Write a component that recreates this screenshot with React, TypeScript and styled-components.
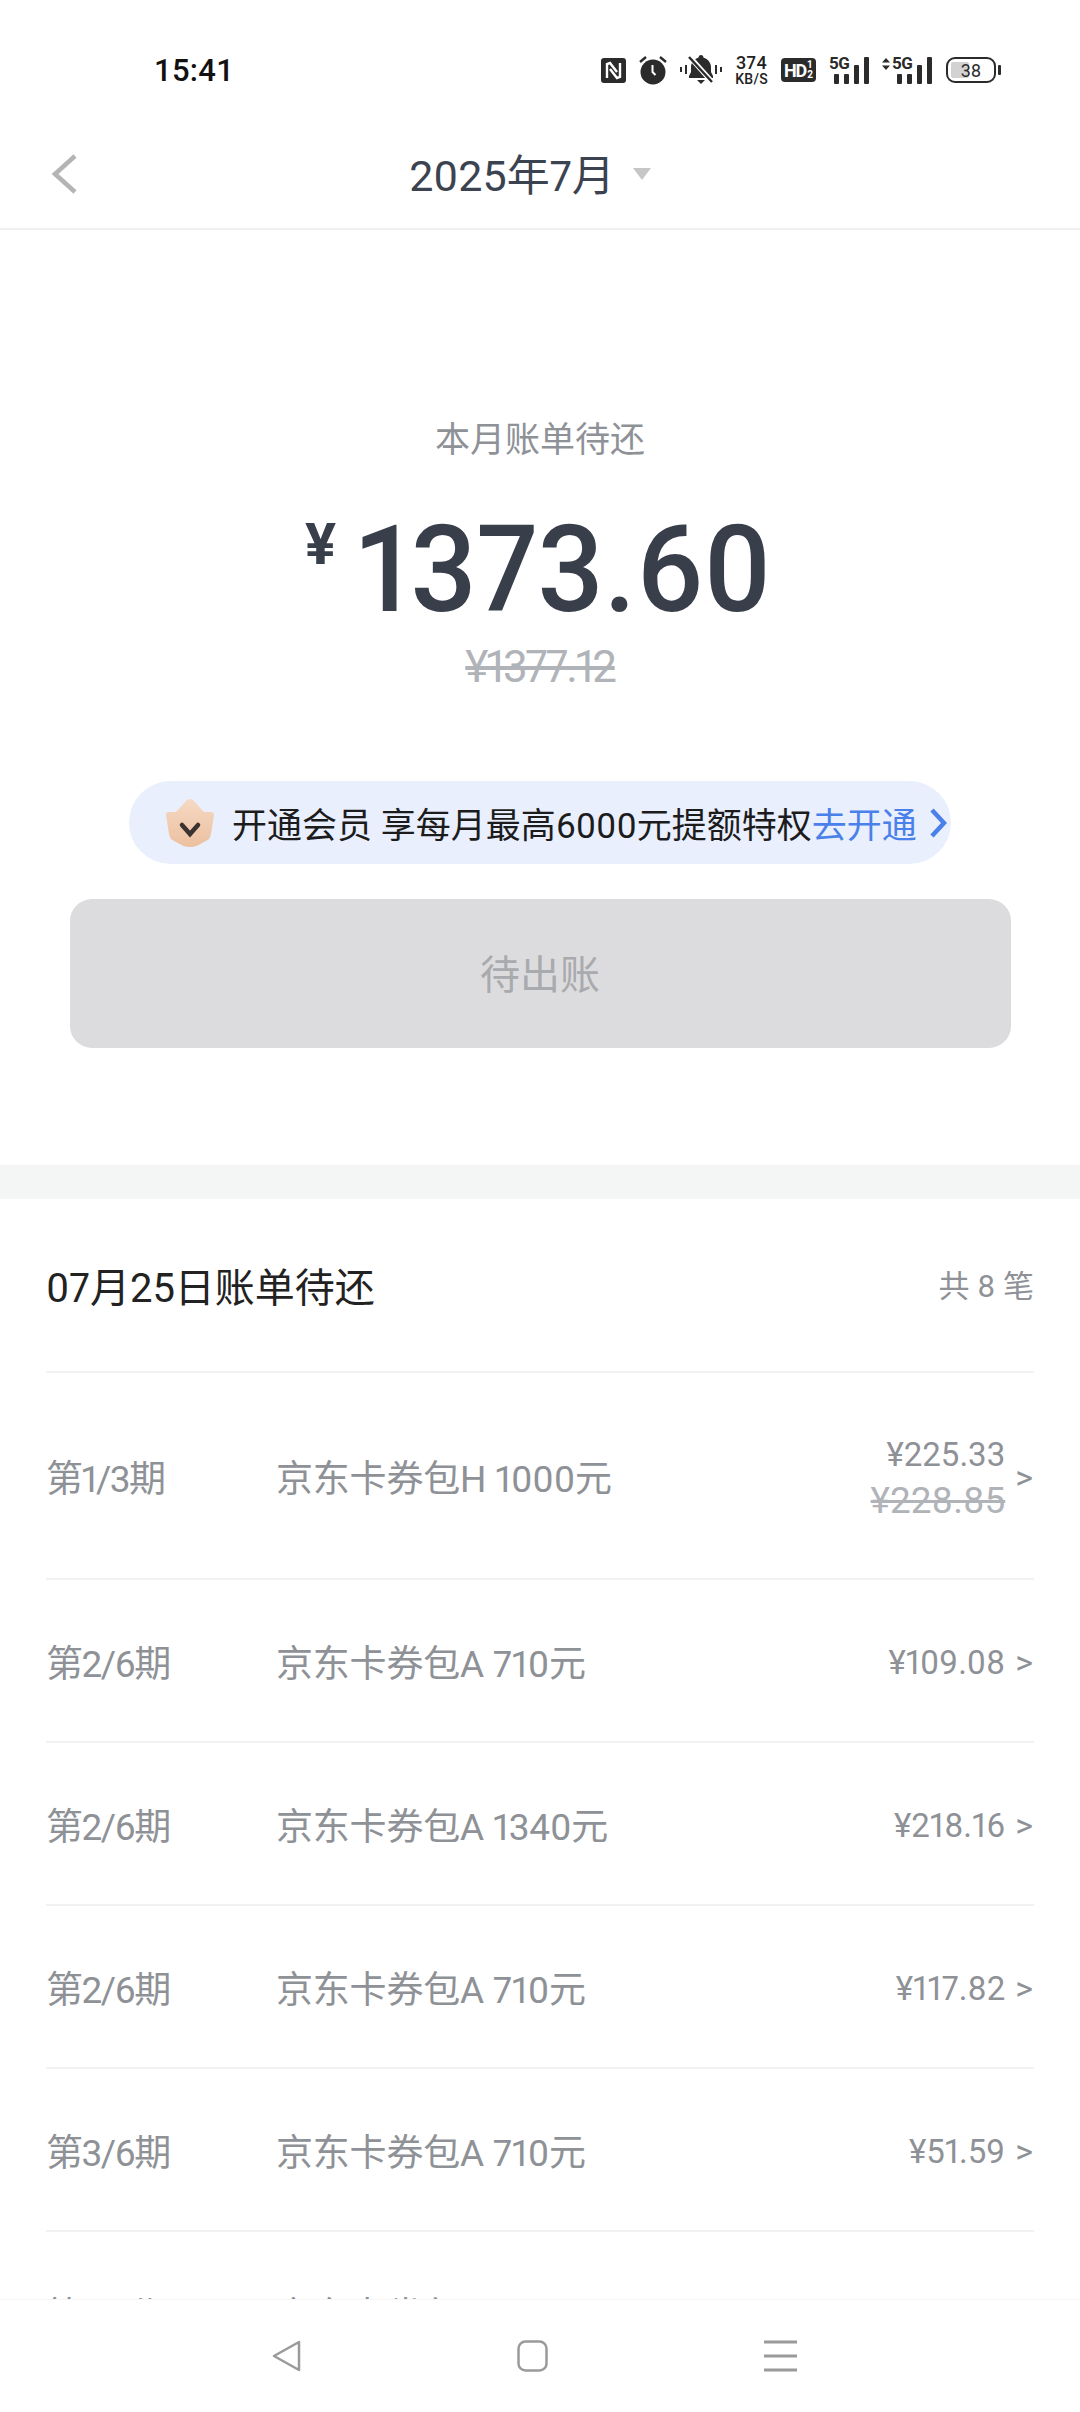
import React, { FC } from "react";
import styled, { createGlobalStyle } from "styled-components";

interface IBill {
  period: string;
  name: string;
  amount: string;
  original?: string;
}

const bills: IBill[] = [
  { period: "第1/3期", name: "京东卡券包H 1000元", amount: "¥225.33", original: "¥228.85" },
  { period: "第2/6期", name: "京东卡券包A 710元", amount: "¥109.08" },
  { period: "第2/6期", name: "京东卡券包A 1340元", amount: "¥218.16" },
  { period: "第2/6期", name: "京东卡券包A 710元", amount: "¥117.82" },
  { period: "第3/6期", name: "京东卡券包A 710元", amount: "¥51.59" },
  { period: "第3/6期", name: "京东卡券包A 710元", amount: "¥88.20" },
];

const SignalBars: FC = () => (
  <svg width="35" height="27" viewBox="0 0 35 27">
    <rect x="0" y="17" width="5" height="10" rx="1" fill="#2b2b2b" />
    <rect x="10" y="17" width="5" height="10" rx="1" fill="#2b2b2b" />
    <rect x="20" y="8" width="5" height="19" rx="1" fill="#2b2b2b" />
    <rect x="30" y="0" width="5" height="27" rx="1" fill="#2b2b2b" />
  </svg>
);

const App: FC = () => {
  return (
    <Page>
      <GlobalStyle />
      <StatusBar>
        <Time>15:41</Time>
        <StatusIcons>
          <svg width="25" height="25" viewBox="0 0 25 25">
            <rect width="25" height="25" rx="3" fill="#2b2b2b" />
            <path d="M6 20V6l3-1 7 9M19 5v14l-3 1-7-9" fill="none" stroke="#fff" strokeWidth="2.4" />
          </svg>
          <svg width="28" height="30" viewBox="0 0 28 30">
            <circle cx="14" cy="17" r="12.5" fill="#2b2b2b" />
            <path d="M13.5 10v7l3 3" fill="none" stroke="#fff" strokeWidth="2" />
            <path d="M1 7l6-5M27 7l-6-5" stroke="#2b2b2b" strokeWidth="2.4" />
          </svg>
          <svg width="42" height="30" viewBox="0 0 42 30">
            <path
              d="M21 0c-1.500 0-2.400 1-2.400 2.500C14 4 11 8 11 12v5l-2 4v2h24v-2l-2-4v-5c0-4-3-8-7.600-9.500C23.400 1 22.500 0 21 0zM17 25h8l-4 4z"
              fill="#2b2b2b"
            />
            <path d="M9 1l24 27" stroke="#fff" strokeWidth="5" />
            <path d="M9 2l23 25" stroke="#2b2b2b" strokeWidth="2.4" />
            <path d="M1 12v5M6 10v9M36 10v9M41 12v5" stroke="#2b2b2b" strokeWidth="2" />
          </svg>
          <Speed>
            <SpeedValue>374</SpeedValue>
            <SpeedUnit>KB/S</SpeedUnit>
          </Speed>
          <HdBadge>
            HD
            <HdFraction>
              <span>1</span>
              <span>2</span>
            </HdFraction>
          </HdBadge>
          <Signal $width={40}>
            <SignalLabel $left={0}>5G</SignalLabel>
            <SignalBars />
          </Signal>
          <Signal $width={50}>
            <SignalLabel $left={10}>5G</SignalLabel>
            <DataArrows width="8" height="12" viewBox="0 0 8 12">
              <path d="M4 0l4 4.500H0zM4 12L0 7.500h8z" fill="#2b2b2b" />
            </DataArrows>
            <SignalBars />
          </Signal>
          <Battery>
            <BatteryFill />
            <BatteryLevel>38</BatteryLevel>
            <BatteryTip />
          </Battery>
        </StatusIcons>
      </StatusBar>

      <Header>
        <BackIcon width="28" height="40" viewBox="0 0 28 40">
          <path d="M25 2L5 20l20 18" fill="none" stroke="#b4b4b4" strokeWidth="4.500" />
        </BackIcon>
        <Title>2025年7月</Title>
        <TitleCaret />
      </Header>

      <Scroller>
        <Summary>
          <SummaryLabel>本月账单待还</SummaryLabel>
          <AmountRow>
            <AmountCurrency>¥</AmountCurrency>
            <AmountValue>1373.60</AmountValue>
          </AmountRow>
          <AmountOriginal>¥1377.12</AmountOriginal>
          <PromoBanner>
            <svg width="48" height="48" viewBox="0 0 48 48">
              <defs>
                <linearGradient id="crown" x1="0" y1="0" x2="0" y2="1">
                  <stop offset="0" stopColor="#f6d9c4" />
                  <stop offset="1" stopColor="#ecc09f" />
                </linearGradient>
              </defs>
              <path
                d="M24 0c2 0 3 1 4 2l9 10c1 1 2 1 4 1h4c2 0 3 1 3 3l-3 19c-1 5-3 6-7 8-5 3-9 5-14 5s-9-2-14-5c-4-2-6-3-7-8L0 16c0-2 1-3 3-3h4c2 0 3 0 4-1l9-10c1-1 2-2 4-2z"
                fill="url(#crown)"
              />
              <path d="M16 26l8 9 8-9" fill="none" stroke="#3a3330" strokeWidth="4.500" strokeLinecap="round" />
            </svg>
            <PromoText>开通会员 享每月最高6000元提额特权</PromoText>
            <PromoAction>去开通</PromoAction>
            <PromoChevron width="18" height="30" viewBox="0 0 18 30">
              <path d="M3 2l12 13L3 28" fill="none" stroke="#4a80ea" strokeWidth="4.500" />
            </PromoChevron>
          </PromoBanner>
          <PendingButton>待出账</PendingButton>
        </Summary>

        <SectionGap />

        <BillSection>
          <BillHeader>
            <BillTitle>07月25日账单待还</BillTitle>
            <BillCount>共 8 笔</BillCount>
          </BillHeader>
          {bills.map((bill, i) => (
            <BillRow key={i} $tall={!!bill.original}>
              <BillPeriod>{bill.period}</BillPeriod>
              <BillName>{bill.name}</BillName>
              <BillAmounts>
                <BillAmount>{bill.amount}</BillAmount>
                {bill.original && <BillOriginal>{bill.original}</BillOriginal>}
              </BillAmounts>
              <BillArrow>&gt;</BillArrow>
            </BillRow>
          ))}
        </BillSection>
      </Scroller>

      <NavBar>
        <svg width="29" height="32" viewBox="0 0 29 32">
          <path d="M27 2v28L2 16z" fill="none" stroke="#9a9a9a" strokeWidth="2.500" strokeLinejoin="round" />
        </svg>
        <svg width="31" height="32" viewBox="0 0 31 32">
          <rect x="1.500" y="1.500" width="28" height="29" rx="7" fill="none" stroke="#9a9a9a" strokeWidth="2.500" />
        </svg>
        <svg width="33" height="32" viewBox="0 0 33 32">
          <path d="M0 2h33M0 16h33M0 30h33" stroke="#9a9a9a" strokeWidth="3" />
        </svg>
      </NavBar>
    </Page>
  );
};

const GlobalStyle = createGlobalStyle`
  html, body {
    margin: 0;
    padding: 0;
    background: #ffffff;
  }
  * {
    box-sizing: border-box;
  }
`;

const Page = styled.div`
  width: 1080px;
  height: 2412px;
  display: flex;
  flex-direction: column;
  overflow: hidden;
  background: #ffffff;
  font-family: Roboto, "Noto Sans CJK SC", sans-serif;
  font-variant-numeric: proportional-nums;
`;

const StatusBar = styled.div`
  height: 130px;
  flex-shrink: 0;
  display: flex;
  align-items: center;
  justify-content: space-between;
  padding: 10px 78px 0 154px;
`;

const Time = styled.div`
  font-size: 31px;
  font-weight: 500;
  font-variant-numeric: tabular-nums;
  letter-spacing: 0.3px;
  color: #111111;
`;

const StatusIcons = styled.div`
  display: flex;
  align-items: center;
  gap: 13px;
`;

const Speed = styled.div`
  display: flex;
  flex-direction: column;
  align-items: center;
  color: #222222;
  font-weight: 500;
`;

const SpeedValue = styled.span`
  font-size: 18px;
  line-height: 18px;
  letter-spacing: 0.5px;
`;

const SpeedUnit = styled.span`
  font-size: 14px;
  line-height: 14px;
  letter-spacing: 0.3px;
`;

const HdBadge = styled.div`
  width: 35px;
  height: 24px;
  border-radius: 4px;
  background: #2b2b2b;
  color: #ffffff;
  display: flex;
  align-items: center;
  justify-content: center;
  gap: 1px;
  font-size: 18px;
  font-weight: 700;
  letter-spacing: -1px;
`;

const HdFraction = styled.span`
  display: flex;
  flex-direction: column;
  font-size: 10px;
  line-height: 10px;
  letter-spacing: 0;
`;

const Signal = styled.div<{ $width: number }>`
  position: relative;
  width: ${(p) => p.$width}px;
  height: 27px;
  display: flex;
  align-items: flex-end;
  justify-content: flex-end;
`;

const SignalLabel = styled.span<{ $left: number }>`
  position: absolute;
  left: ${(p) => p.$left}px;
  top: -3px;
  font-size: 17px;
  line-height: 18px;
  font-weight: 700;
  letter-spacing: -0.5px;
  color: #2b2b2b;
`;

const DataArrows = styled.svg`
  position: absolute;
  left: 0;
  top: 1px;
`;

const Battery = styled.div`
  position: relative;
  width: 50px;
  height: 26px;
  margin-left: 1px;
  margin-right: 6px;
  border: 2px solid #2b2b2b;
  border-radius: 9px;
  display: flex;
  align-items: center;
  justify-content: center;
`;

const BatteryFill = styled.div`
  position: absolute;
  left: 3px;
  top: 3px;
  bottom: 3px;
  width: 18px;
  border-radius: 2px;
  background: #d2d2d2;
`;

const BatteryLevel = styled.span`
  position: relative;
  font-size: 18px;
  color: #2b2b2b;
`;

const BatteryTip = styled.div`
  position: absolute;
  right: -7px;
  top: 6px;
  width: 3px;
  height: 10px;
  border-radius: 1px;
  background: #2b2b2b;
`;

const Header = styled.div`
  position: relative;
  height: 100px;
  flex-shrink: 0;
  display: flex;
  align-items: center;
  justify-content: center;
  gap: 18px;
  border-bottom: 2px solid #f0f0f0;
  padding: 0 20px 14px 0;
`;

const BackIcon = styled.svg`
  position: absolute;
  left: 50px;
  top: 24px;
`;

const Title = styled.div`
  font-size: 43px;
  color: #3c4350;
`;

const TitleCaret = styled.div`
  width: 0;
  height: 0;
  margin-top: 4px;
  border-left: 9px solid transparent;
  border-right: 9px solid transparent;
  border-top: 12px solid #c6c6c6;
`;

const Scroller = styled.div`
  flex: 1;
  min-height: 0;
  overflow: hidden;
`;

const Summary = styled.div`
  height: 935px;
  display: flex;
  flex-direction: column;
  align-items: center;
  padding-top: 187px;
`;

const SummaryLabel = styled.div`
  font-size: 35px;
  line-height: 48px;
  color: #8e9196;
`;

const AmountRow = styled.div`
  display: flex;
  align-items: flex-start;
  height: 130px;
  margin-top: 40px;
  padding-left: 5px;
  color: #383e4a;
  width: 480px;
`;

const AmountCurrency = styled.span`
  font-size: 58px;
  font-weight: 700;
  line-height: 64px;
  margin-top: 7px;
`;

const AmountValue = styled.span`
  font-size: 120px;
  font-weight: 500;
  line-height: 130px;
  margin-left: 21px;
  transform: scaleX(0.97);
  transform-origin: left top;
`;

const AmountOriginal = styled.div`
  font-size: 44px;
  line-height: 52px;
  color: #b0b3b8;
  text-decoration: line-through;
  letter-spacing: -2.3px;
  margin-top: 6px;
`;

const PromoBanner = styled.div`
  width: 822px;
  height: 83px;
  margin-top: 88px;
  padding-left: 37px;
  border-radius: 42px;
  background: #e9effc;
  display: flex;
  align-items: center;
`;

const PromoText = styled.span`
  font-size: 35px;
  color: #1c1c1c;
  margin-left: 18px;
  white-space: nowrap;
`;

const PromoAction = styled.span`
  font-size: 35px;
  color: #4a80ea;
  white-space: nowrap;
`;

const PromoChevron = styled.svg`
  margin-left: 12px;
`;

const PendingButton = styled.div`
  width: 941px;
  height: 149px;
  margin-top: 35px;
  padding-bottom: 3px;
  border-radius: 22px;
  background: #dcdcde;
  color: #a9aaad;
  font-size: 40px;
  display: flex;
  align-items: center;
  justify-content: center;
`;

const SectionGap = styled.div`
  height: 34px;
  background: #f4f6f5;
`;

const BillSection = styled.div`
  padding: 0 46px 0 46px;
`;

const BillHeader = styled.div`
  height: 174px;
  display: flex;
  align-items: center;
  justify-content: space-between;
  border-bottom: 2px solid #f2f2f2;
`;

const BillTitle = styled.div`
  font-size: 40px;
  color: #222222;
`;

const BillCount = styled.div`
  font-size: 31px;
  color: #8e9196;
  margin-bottom: 4px;
`;

const BillRow = styled.div<{ $tall: boolean }>`
  height: ${(p) => (p.$tall ? 207 : 163)}px;
  display: flex;
  align-items: center;
  border-bottom: 2px solid #f2f2f2;
  color: #8e9196;
`;

const BillPeriod = styled.div`
  width: 230px;
  font-size: 37px;
  letter-spacing: -1.5px;
`;

const BillName = styled.div`
  flex: 1;
  font-size: 37px;
  letter-spacing: -0.2px;
`;

const BillAmounts = styled.div`
  display: flex;
  flex-direction: column;
  align-items: flex-end;
  padding-top: 5px;
`;

const BillAmount = styled.div`
  font-size: 33px;
  line-height: 46px;
`;

const BillOriginal = styled.div`
  font-size: 37px;
  line-height: 46px;
  color: #b0b3b8;
  text-decoration: line-through;
`;

const BillArrow = styled.div`
  margin-left: 10px;
  margin-right: 1px;
  font-size: 34px;
  padding-top: 3px;
`;

const NavBar = styled.div`
  height: 113px;
  flex-shrink: 0;
  display: flex;
  align-items: center;
  justify-content: center;
  gap: 216px;
  padding-right: 11px;
  background: #ffffff;
  border-top: 1px solid #f6f6f6;
`;

export default App;
